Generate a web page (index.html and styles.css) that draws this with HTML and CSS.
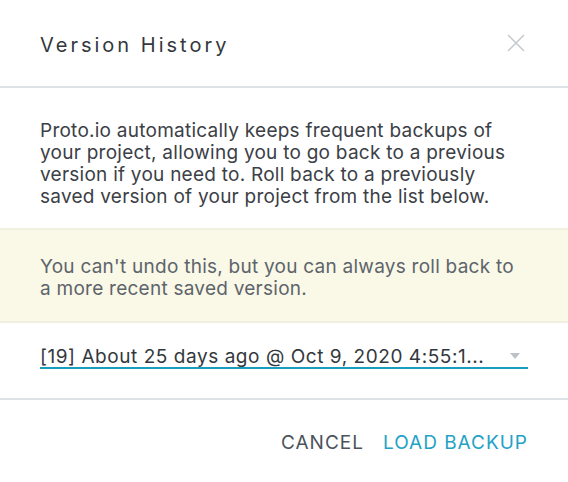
FILE: index.html
```html
<!DOCTYPE html>
<html lang="en">
<head>
  <meta charset="UTF-8" />
  <meta name="viewport" content="width=device-width, initial-scale=1.0"/>
  <title>Version History</title>
  <link rel="stylesheet" href="styles.css">
</head>
<body>
  <div class="dialog">
    <div class="dialog-header">
      <h1>Version History</h1>
      <button class="btn-close" aria-label="Close">
        <svg width="20" height="20" viewBox="0 0 20 20">
          <path d="M2 2 L18 18 M18 2 L2 18" stroke="#c3c9cd" stroke-width="1.5" fill="none"/>
        </svg>
      </button>
    </div>

    <p class="intro">Proto.io automatically keeps frequent backups of your project, allowing you to go back to a previous version if you need to. Roll back to a previously saved version of your project from the list below.</p>

    <div class="notice">You can't undo this, but you can always roll back to a more recent saved version.</div>

    <div class="picker">
      <div class="select">
        <span class="select-value">[19] About 25 days ago @ Oct 9, 2020 4:55:1...</span>
        <span class="select-arrow"></span>
      </div>
    </div>

    <div class="dialog-footer">
      <button class="btn-cancel">CANCEL</button>
      <button class="btn-load">LOAD BACKUP</button>
    </div>
  </div>
</body>
</html>
```

FILE: styles.css
```css
html, body {
  margin: 0;
  padding: 0;
  background: #fff;
}

body {
  font-family: Inter, 'Noto Sans', sans-serif;
  color: #3b4046;
}

.dialog {
  width: 568px;
  height: 482px;
  background: #fff;
  display: flex;
  flex-direction: column;
}

.dialog-header {
  height: 86px;
  padding: 0 40px;
  display: flex;
  align-items: center;
  justify-content: space-between;
  border-bottom: 2px solid #dde2e6;
}

h1 {
  margin: 0;
  font-size: 20px;
  font-weight: 400;
  letter-spacing: 3px;
  color: #33383d;
  padding-top: 3px;
}

button {
  background: none;
  border: none;
  padding: 0;
  cursor: pointer;
  font-family: inherit;
}

.btn-close {
  width: 20px;
  height: 20px;
  margin-right: 2px;
}

.intro {
  margin: 0;
  padding: 32px 40px 20px;
  font-size: 19px;
  line-height: 22px;
  letter-spacing: 0.25px;
  color: #3b4046;
}

.notice {
  background: #faf8e7;
  border-top: 2px solid #f1f0e0;
  border-bottom: 2px solid #f1f0e0;
  padding: 26px 40px 21px;
  font-size: 19px;
  line-height: 22px;
  letter-spacing: 0.25px;
  color: #5d646b;
}

.picker {
  padding: 22px 40px 29px;
  border-bottom: 2px solid #dde2e6;
}

.select {
  display: flex;
  align-items: center;
  justify-content: space-between;
  height: 22px;
  border-bottom: 2px solid #1a9cbc;
}

.select-value {
  font-size: 19px;
  letter-spacing: 0.55px;
  color: #33383d;
}

.select-arrow {
  width: 0;
  height: 0;
  border-left: 5px solid transparent;
  border-right: 5px solid transparent;
  border-top: 6px solid #bcc2c7;
  margin-right: 8px;
}

.dialog-footer {
  display: flex;
  justify-content: flex-end;
  gap: 19px;
  padding: 31px 40px 0;
}

.btn-cancel, .btn-load {
  font-size: 19px;
  letter-spacing: 1px;
}

.btn-cancel { color: #4c535a; }
.btn-load { color: #23a2c6; }
```
